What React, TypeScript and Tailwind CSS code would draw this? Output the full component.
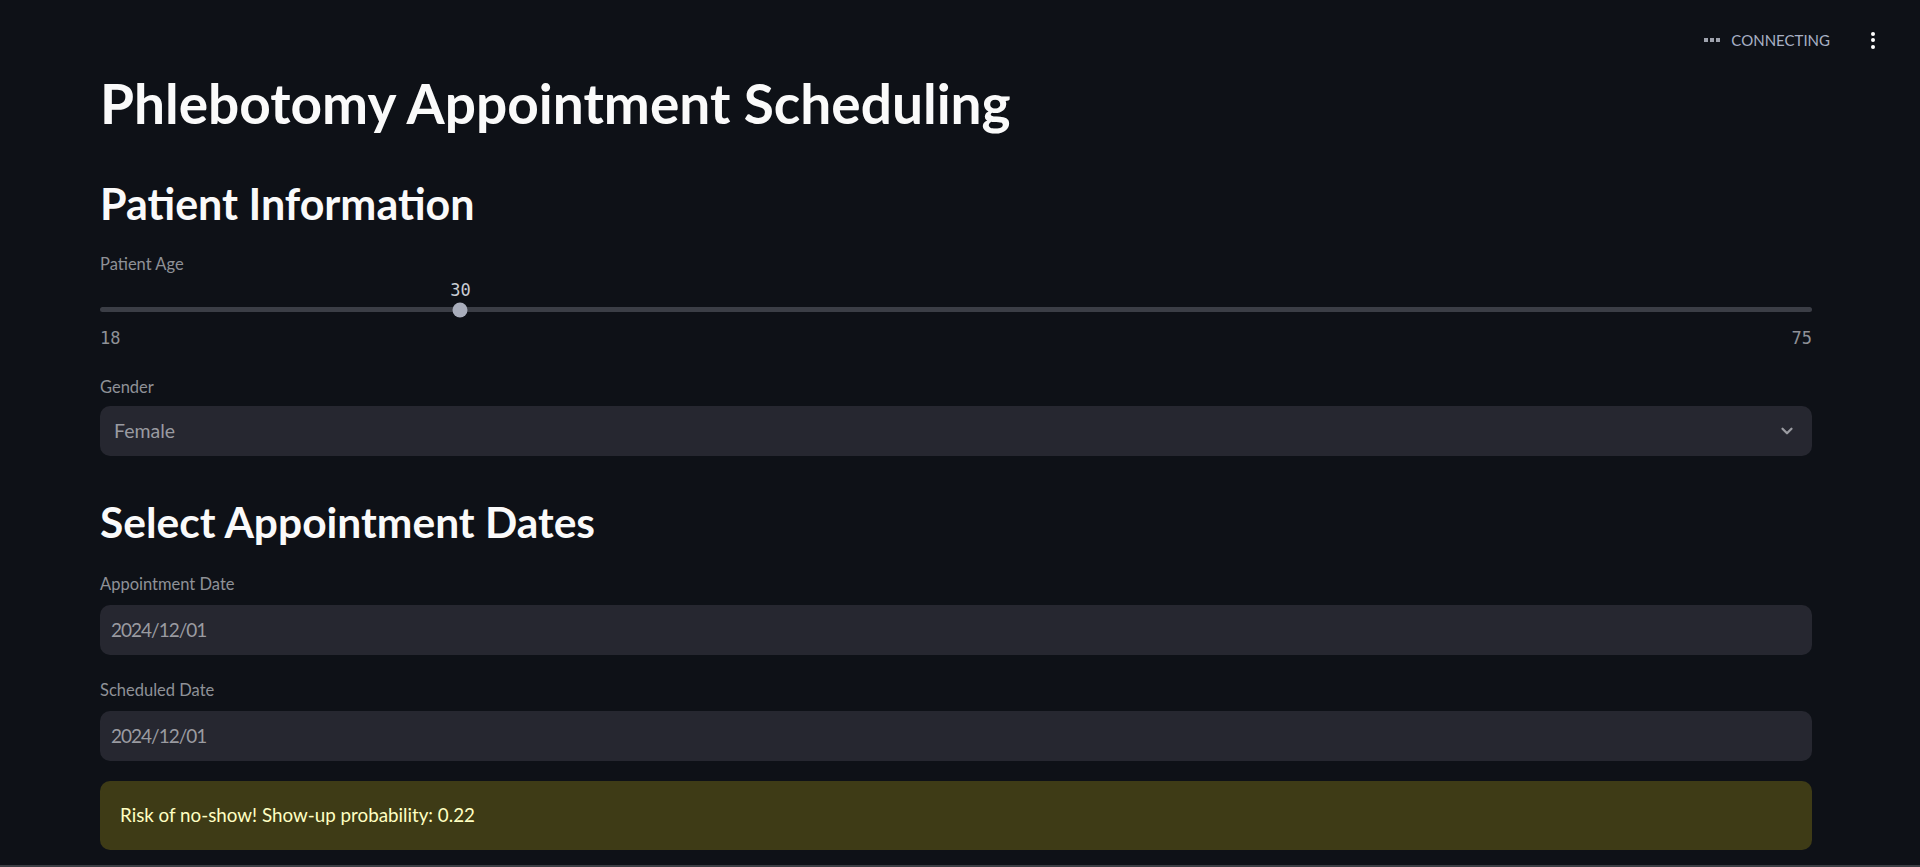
import { ChevronDown } from 'lucide-react'

const MIN_AGE = 18
const MAX_AGE = 75

// campos de fecha
const dateFields = [
  { label: 'Appointment Date', value: '2024/12/01', mt: 'mt-[26px]' },
  { label: 'Scheduled Date', value: '2024/12/01', mt: 'mt-[23px]' },
]

function Label({ text, className = '' }: { text: string; className?: string }) {
  return (
    <div className={`h-6 flex items-center text-[16.5px] text-[#8f9197] ${className}`}>
      {text}
    </div>
  )
}

function AgeSlider({ value }: { value: number }) {
  const pct = ((value - MIN_AGE) / (MAX_AGE - MIN_AGE)) * 100

  return (
    <div className="font-['DejaVu_Sans_Mono',monospace]">
      {/* valor actual encima del thumb */}
      <div className="relative h-[22px] mt-[3px]">
        <span
          className="absolute top-0 -translate-x-1/2 text-[17px] leading-[22px] text-[#c9ccd3]"
          style={{ left: `${pct}%` }}
        >
          {value}
        </span>
      </div>
      <div className="relative h-[17px] flex items-center">
        <div className="w-full h-[5px] rounded-full bg-[#3b3e46]" />
        <div
          className="absolute top-1/2 w-[15px] h-[15px] -translate-x-1/2 -translate-y-1/2 rounded-full bg-[#a8adbb]"
          style={{ left: `${pct}%` }}
        />
      </div>
      <div className="mt-[10px] h-[22px] flex justify-between items-center text-[17px] text-[#8f9197]">
        <span>{MIN_AGE}</span>
        <span>{MAX_AGE}</span>
      </div>
    </div>
  )
}

export default function App() {
  return (
    <div className="relative h-[867px] bg-[#0e1117] border-b-2 border-[#3c3e44] font-['Lato',sans-serif] overflow-hidden">
      {/* header fijo */}
      <div className="absolute top-[29px] right-[45px] flex items-center">
        <div className="flex gap-[2px] mr-[11px]">
          <span className="w-[4px] h-[4px] bg-[#9ea2ad]" />
          <span className="w-[4px] h-[4px] bg-[#9ea2ad]" />
          <span className="w-[4px] h-[4px] bg-[#9ea2ad]" />
        </div>
        <span className="text-[15px] text-[#a8b0c4]">CONNECTING</span>
        <div className="ml-[41px] flex flex-col gap-[2.5px]">
          <span className="w-[4px] h-[4px] rounded-full bg-white" />
          <span className="w-[4px] h-[4px] rounded-full bg-white" />
          <span className="w-[4px] h-[4px] rounded-full bg-white" />
        </div>
      </div>

      <div className="pl-[100px] pr-[108px] pt-[73px] flex flex-col">
        <h1 className="h-[60px] flex items-center text-[55px] font-bold text-[#fafafa]">
          Phlebotomy Appointment Scheduling
        </h1>

        <h2 className="mt-[47px] h-12 flex items-center text-[43px] font-bold text-[#fafafa]">
          Patient Information
        </h2>

        <Label text="Patient Age" className="mt-[24px]" />
        <AgeSlider value={30} />

        <Label text="Gender" className="mt-[25px]" />
        <div className="mt-[7px] h-[50px] rounded-[10px] bg-[#262730] flex items-center justify-between pl-[14px] pr-[16px]">
          <span className="text-[19.5px] text-[#9a9ba1]">Female</span>
          <ChevronDown className="w-[18px] h-[18px] text-[#9a9ba1]" strokeWidth={3} />
        </div>

        <h2 className="mt-[42px] h-12 flex items-center text-[42.5px] font-bold text-[#fafafa]">
          Select Appointment Dates
        </h2>

        {dateFields.map(f => (
          <div key={f.label} className={f.mt}>
            <Label text={f.label} />
            <div className="mt-[9px] h-[50px] rounded-[10px] bg-[#262730] flex items-center px-[11px]">
              <span className="text-[19px] tracking-[-1px] text-[#9a9ba1]">{f.value}</span>
            </div>
          </div>
        ))}

        <div className="mt-[20px] h-[69px] rounded-[10px] bg-[#3e3b16] flex items-center px-[20px]">
          <span className="text-[18.8px] text-[#ffffc2]">Risk of no-show! Show-up probability: 0.22</span>
        </div>
      </div>
    </div>
  )
}
